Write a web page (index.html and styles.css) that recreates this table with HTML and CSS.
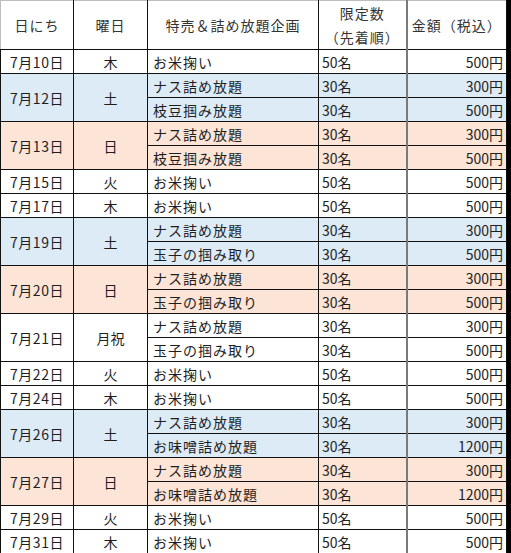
FILE: index.html
```html
<!DOCTYPE html>
<html lang="ja">
<head>
<meta charset="utf-8">
<link rel="stylesheet" href="styles.css">
</head>
<body>
<table class="sched">
  <colgroup>
    <col class="c-date"><col class="c-dow"><col class="c-item"><col class="c-qty"><col class="c-price">
  </colgroup>
  <thead>
    <tr class="head">
      <th class="h-left">日にち</th>
      <th>曜日</th>
      <th>特売＆詰め放題企画</th>
      <th class="qty-h">限定数<br>（先着順）</th>
      <th class="price-h">金額（税込）</th>
    </tr>
  </thead>
  <tbody>
    <tr><td class="d">7月10日</td><td class="w">木</td><td class="i">お米掬い</td><td class="q">50名</td><td class="p">500円</td></tr>

    <tr class="blue"><td class="d" rowspan="2">7月12日</td><td class="w" rowspan="2">土</td><td class="i">ナス詰め放題</td><td class="q">30名</td><td class="p">300円</td></tr>
    <tr class="blue"><td class="i">枝豆掴み放題</td><td class="q">30名</td><td class="p">500円</td></tr>

    <tr class="pink"><td class="d" rowspan="2">7月13日</td><td class="w" rowspan="2">日</td><td class="i">ナス詰め放題</td><td class="q">30名</td><td class="p">300円</td></tr>
    <tr class="pink"><td class="i">枝豆掴み放題</td><td class="q">30名</td><td class="p">500円</td></tr>

    <tr><td class="d">7月15日</td><td class="w">火</td><td class="i">お米掬い</td><td class="q">50名</td><td class="p">500円</td></tr>
    <tr><td class="d">7月17日</td><td class="w">木</td><td class="i">お米掬い</td><td class="q">50名</td><td class="p">500円</td></tr>

    <tr class="blue"><td class="d" rowspan="2">7月19日</td><td class="w" rowspan="2">土</td><td class="i">ナス詰め放題</td><td class="q">30名</td><td class="p">300円</td></tr>
    <tr class="blue"><td class="i">玉子の掴み取り</td><td class="q">30名</td><td class="p">500円</td></tr>

    <tr class="pink"><td class="d" rowspan="2">7月20日</td><td class="w" rowspan="2">日</td><td class="i">ナス詰め放題</td><td class="q">30名</td><td class="p">300円</td></tr>
    <tr class="pink"><td class="i">玉子の掴み取り</td><td class="q">30名</td><td class="p">500円</td></tr>

    <tr><td class="d" rowspan="2">7月21日</td><td class="w" rowspan="2">月祝</td><td class="i">ナス詰め放題</td><td class="q">30名</td><td class="p">300円</td></tr>
    <tr><td class="i">玉子の掴み取り</td><td class="q">30名</td><td class="p">500円</td></tr>

    <tr><td class="d">7月22日</td><td class="w">火</td><td class="i">お米掬い</td><td class="q">50名</td><td class="p">500円</td></tr>
    <tr><td class="d">7月24日</td><td class="w">木</td><td class="i">お米掬い</td><td class="q">50名</td><td class="p">500円</td></tr>

    <tr class="blue"><td class="d" rowspan="2">7月26日</td><td class="w" rowspan="2">土</td><td class="i">ナス詰め放題</td><td class="q">30名</td><td class="p">300円</td></tr>
    <tr class="blue"><td class="i">お味噌詰め放題</td><td class="q">30名</td><td class="p">1200円</td></tr>

    <tr class="pink"><td class="d" rowspan="2">7月27日</td><td class="w" rowspan="2">日</td><td class="i">ナス詰め放題</td><td class="q">30名</td><td class="p">300円</td></tr>
    <tr class="pink"><td class="i">お味噌詰め放題</td><td class="q">30名</td><td class="p">1200円</td></tr>

    <tr><td class="d">7月29日</td><td class="w">火</td><td class="i">お米掬い</td><td class="q">50名</td><td class="p">500円</td></tr>
    <tr><td class="d">7月31日</td><td class="w">木</td><td class="i">お米掬い</td><td class="q">50名</td><td class="p">500円</td></tr>
  </tbody>
</table>
</body>
</html>
```

FILE: styles.css
```css
html, body {
  margin: 0;
  padding: 0;
  background: #000;
}

body {
  width: 511px;
  height: 553px;
  overflow: hidden;
}

.sched {
  border-collapse: collapse;
  table-layout: fixed;
  width: 506px;
  background: #fff;
  font-family: "Noto Sans CJK JP", "Noto Sans", sans-serif;
  font-size: 14px;
  color: #1e1e1e;
  line-height: 1;
}

.c-date { width: 73px; }
.c-dow { width: 74px; }
.c-item { width: 171px; }
.c-qty { width: 88px; }
.c-price { width: 100px; }

.sched th,
.sched td {
  border: 1px solid #111;
  padding: 0;
  overflow: hidden;
  white-space: nowrap;
}

.sched th {
  font-weight: normal;
  text-align: center;
  color: #333;
  border-top-color: #bdbdbd;
  letter-spacing: 1px;
}

.sched .h-left {
  border-left-color: #bdbdbd;
}

.head {
  height: 48px;
}

.qty-h {
  line-height: 24px;
}

.sched tbody tr {
  height: 24px;
}

.sched td:first-child {
  border-left-color: #111;
}

.d { text-align: center; letter-spacing: 0.5px; }
.w { text-align: center; }
.i { text-align: left; padding-left: 5px !important; letter-spacing: 1px; }
.q { text-align: left; padding-left: 3px !important; }
.p { text-align: right; padding-right: 3px !important; }

.sched .q {
  border-right: 2px solid #7a7a7a;
}
.sched .qty-h {
  border-right: 2px solid #7a7a7a;
}

.blue td { background: #ddebf7; }
.pink td { background: #fce4d6; }
```
